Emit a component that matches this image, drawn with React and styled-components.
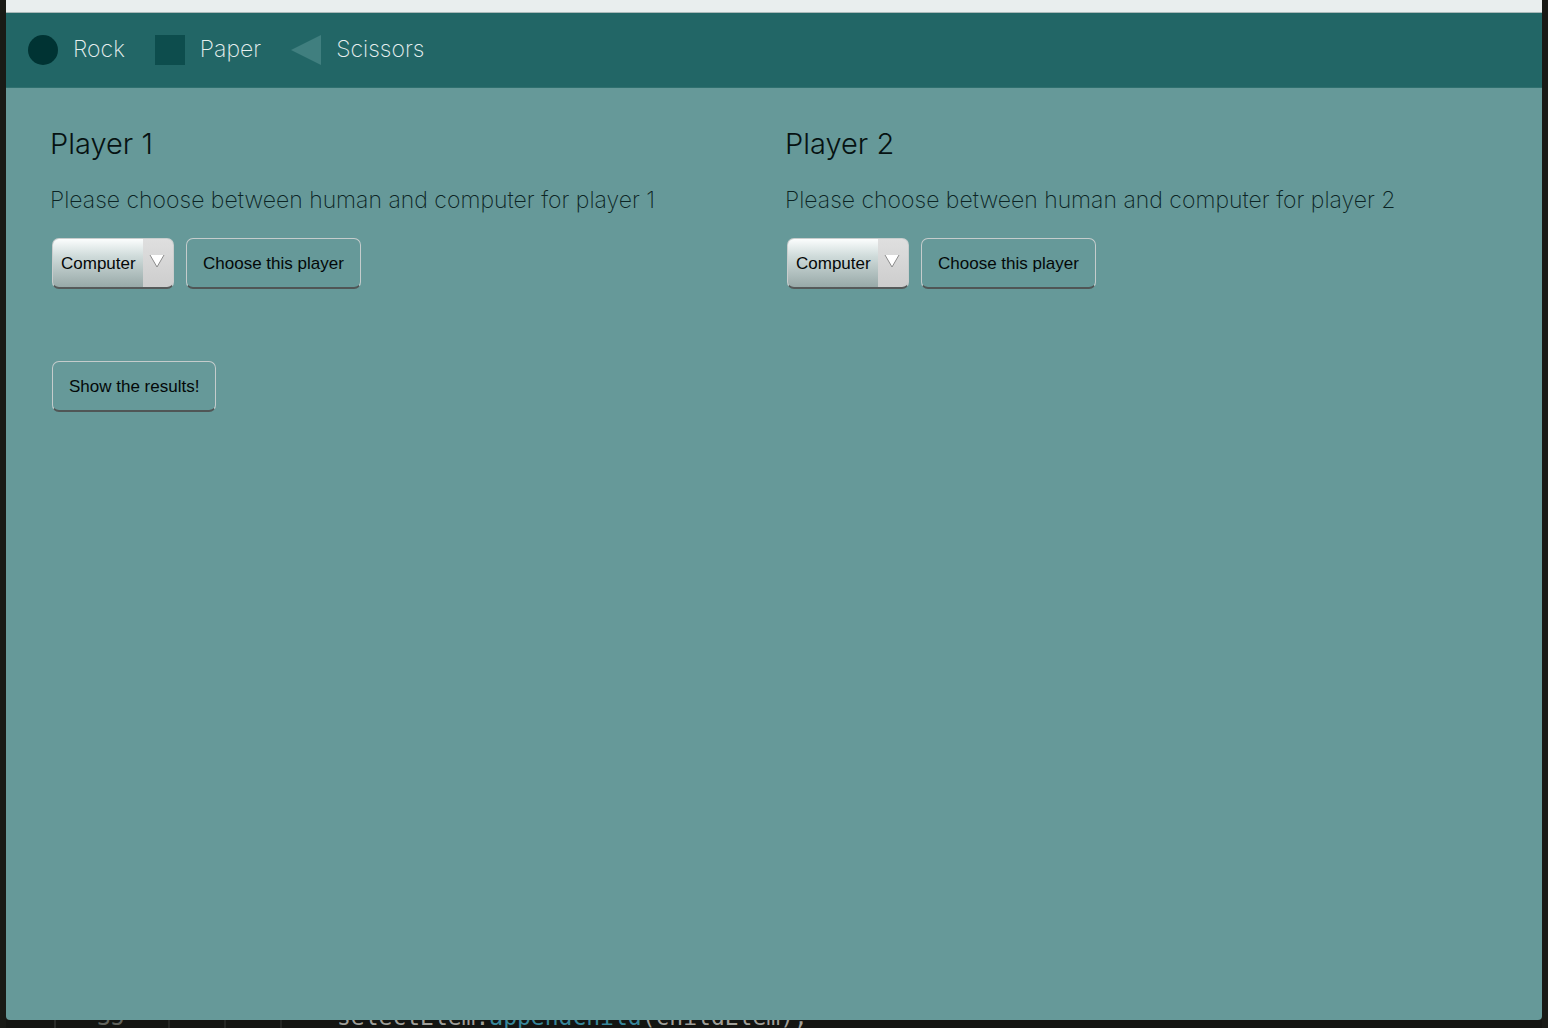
import React, { useState } from "react";
import styled, { createGlobalStyle } from "styled-components";

const GlobalStyle = createGlobalStyle`
  *, *::before, *::after { box-sizing: border-box; }
  body { margin: 0; background: #191a16; }
`;

const Screen = styled.div`
  display: flex;
  flex-direction: column;
  min-height: 100vh;
  padding: 0 6px;
  background: #191a16;
  font-family: Inter, "Liberation Sans", sans-serif;
`;

const BrowserWindow = styled.div`
  flex: 1;
  display: flex;
  flex-direction: column;
  overflow: hidden;
  border-radius: 0 0 4px 4px;
  background: #669999;
`;

const Toolbar = styled.div`
  height: 13px;
  background: #e9eeee;
  border-bottom: 1px solid #a9b9b9;
`;

const Header = styled.header`
  height: 75px;
  padding: 0 22px 2px;
  display: flex;
  align-items: center;
  background: #226666;
  border-bottom: 1px solid #2f706f;
`;

const Legend = styled.ul`
  display: flex;
  gap: 30px;
  margin: 0;
  padding: 0;
  list-style: none;
`;

const LegendItem = styled.li`
  display: flex;
  align-items: flex-end;
  gap: 15px;
  color: #e6efef;
  font-size: 23px;
  font-weight: 200;
  line-height: 32px;
`;

const Shape = styled.svg`
  display: block;
  width: 30px;
  height: 30px;
`;

const Main = styled.main`
  padding: 36px 22px 36px 44px;
`;

const Players = styled.div`
  display: grid;
  grid-template-columns: repeat(2, minmax(0, 1fr));
`;

const Title = styled.h2`
  margin: 0 0 20px;
  color: #061212;
  font-size: 29px;
  font-weight: 300;
  line-height: 40px;
`;

const Prompt = styled.label`
  display: block;
  margin-bottom: 22px;
  color: #0c2424;
  font-size: 23px;
  font-weight: 200;
  line-height: 32px;
`;

const Controls = styled.div`
  display: flex;
  gap: 12px;
  padding-left: 2px;
`;

const SelectBox = styled.div`
  position: relative;
`;

const Select = styled.select`
  appearance: none;
  display: block;
  width: 122px;
  height: 51px;
  padding: 0 32px 0 8px;
  border: 2px solid #c9cdcd;
  border-width: 1px 1px 2px;
  border-bottom-color: #565a5a;
  border-radius: 7px;
  background:
    linear-gradient(#dfdfdf, #cdcdcd) right / 30px 100% no-repeat,
    linear-gradient(#fbfdfd, #d0dcdb 35%, #98a9a8);
  color: #050808;
  font: 17px "Liberation Sans", Arial, sans-serif;
`;

const Arrow = styled.svg`
  position: absolute;
  top: 16px;
  right: 9px;
  width: 16px;
  height: 14px;
  pointer-events: none;
`;

const Button = styled.button`
  height: 51px;
  padding: 2px 16px 0;
  border: 2px solid #c5cccc;
  border-width: 1px 1px 2px;
  border-bottom-color: #505656;
  border-radius: 7px;
  background: transparent;
  color: #030808;
  font: 17px "Liberation Sans", Arial, sans-serif;
`;

const Results = styled(Controls)`
  margin-top: 72px;
`;

const Editor = styled.div`
  display: flex;
  align-items: flex-end;
  height: 8px;
  padding-left: 91px;
  overflow: hidden;
  background:
    linear-gradient(#2b2c29, #2b2c29) 48px 0 / 2px 100% no-repeat,
    linear-gradient(#252623, #252623) 162px 0 / 2px 100% no-repeat,
    linear-gradient(#252623, #252623) 218px 0 / 2px 100% no-repeat,
    linear-gradient(#252623, #252623) 274px 0 / 2px 100% no-repeat,
    #141512;
  color: #a09f99;
  font: 23px/22px "DejaVu Sans Mono", monospace;
  white-space: pre;
`;

const LineNumber = styled.span`
  width: 240px;
  color: #62635d;
`;

const Method = styled.span`
  color: #37869a;
`;

function PlayerPanel({ number }) {
  const [kind, setKind] = useState("Computer");
  const id = `player-${number}`;
  return (
    <section>
      <Title>Player {number}</Title>
      <Prompt htmlFor={id}>
        Please choose between human and computer for player {number}
      </Prompt>
      <Controls>
        <SelectBox>
          <Select id={id} value={kind} onChange={(e) => setKind(e.target.value)}>
            <option>Computer</option>
            <option>Human</option>
          </Select>
          <Arrow viewBox="0 0 16 14" aria-hidden="true">
            <path d="M1 1H15L8 13Z" fill="#fff" />
            <path d="M1 1L8 13L15 1" fill="none" stroke="#8b8b8b" />
          </Arrow>
        </SelectBox>
        <Button type="button">Choose this player</Button>
      </Controls>
    </section>
  );
}

export default function App() {
  return (
    <Screen>
      <GlobalStyle />
      <BrowserWindow>
        <Toolbar />
        <Header>
          <Legend>
            <LegendItem>
              <Shape viewBox="0 0 30 30" aria-hidden="true">
                <circle cx="15" cy="15" r="15" fill="#003333" />
              </Shape>
              Rock
            </LegendItem>
            <LegendItem>
              <Shape viewBox="0 0 30 30" aria-hidden="true">
                <rect width="30" height="30" fill="#0d4d4d" />
              </Shape>
              Paper
            </LegendItem>
            <LegendItem>
              <Shape viewBox="0 0 30 30" aria-hidden="true">
                <path d="M0 15L30 0V30Z" fill="#407f7f" />
              </Shape>
              Scissors
            </LegendItem>
          </Legend>
        </Header>
        <Main>
          <Players>
            <PlayerPanel number={1} />
            <PlayerPanel number={2} />
          </Players>
          <Results>
            <Button type="button">Show the results!</Button>
          </Results>
        </Main>
      </BrowserWindow>
      <Editor>
        <LineNumber>35</LineNumber>
        <span>
          selectElem.<Method>appendChild</Method>(childElem);
        </span>
      </Editor>
    </Screen>
  );
}
